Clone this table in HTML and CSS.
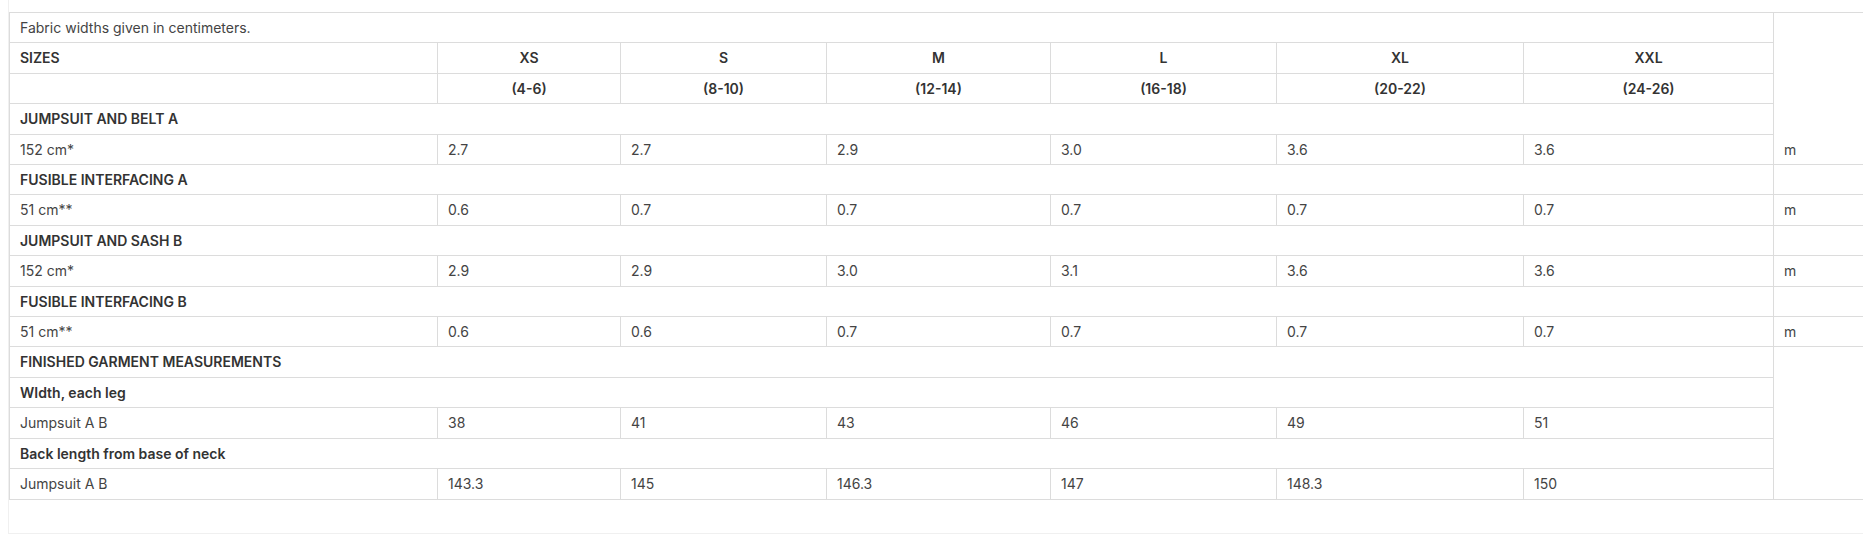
FILE: index.html
```html
<!DOCTYPE html>
<html lang="en">
<head>
<meta charset="utf-8">
<title>Fabric requirements</title>
<link rel="stylesheet" href="styles.css">
</head>
<body>
<div class="wrap">
  <table class="chart">
    <colgroup>
      <col class="c-label">
      <col class="c-xs">
      <col class="c-s">
      <col class="c-m">
      <col class="c-l">
      <col class="c-xl">
      <col class="c-xxl">
      <col class="c-unit">
    </colgroup>
    <tbody>
      <tr><td colspan="7" class="note">Fabric widths given in centimeters.</td></tr>
      <tr class="head">
        <td>SIZES</td><td class="ctr">XS</td><td class="ctr">S</td><td class="ctr">M</td><td class="ctr">L</td><td class="ctr">XL</td><td class="ctr">XXL</td>
      </tr>
      <tr class="head">
        <td></td><td class="ctr">(4-6)</td><td class="ctr">(8-10)</td><td class="ctr">(12-14)</td><td class="ctr">(16-18)</td><td class="ctr">(20-22)</td><td class="ctr">(24-26)</td>
      </tr>
      <tr class="head"><td colspan="7">JUMPSUIT AND BELT A</td></tr>
      <tr><td>152 cm*</td><td>2.7</td><td>2.7</td><td>2.9</td><td>3.0</td><td>3.6</td><td>3.6</td><td>m</td></tr>
      <tr class="head"><td colspan="7">FUSIBLE INTERFACING A</td><td></td></tr>
      <tr><td>51 cm**</td><td>0.6</td><td>0.7</td><td>0.7</td><td>0.7</td><td>0.7</td><td>0.7</td><td>m</td></tr>
      <tr class="head"><td colspan="7">JUMPSUIT AND SASH B</td><td></td></tr>
      <tr><td>152 cm*</td><td>2.9</td><td>2.9</td><td>3.0</td><td>3.1</td><td>3.6</td><td>3.6</td><td>m</td></tr>
      <tr class="head"><td colspan="7">FUSIBLE INTERFACING B</td><td></td></tr>
      <tr><td>51 cm**</td><td>0.6</td><td>0.6</td><td>0.7</td><td>0.7</td><td>0.7</td><td>0.7</td><td>m</td></tr>
      <tr class="head"><td colspan="7">FINISHED GARMENT MEASUREMENTS</td></tr>
      <tr class="head"><td colspan="7">WIdth, each leg</td></tr>
      <tr><td>Jumpsuit A B</td><td>38</td><td>41</td><td>43</td><td>46</td><td>49</td><td>51</td></tr>
      <tr class="head"><td colspan="7">Back length from base of neck</td></tr>
      <tr class="last"><td>Jumpsuit A B</td><td>143.3</td><td>145</td><td>146.3</td><td>147</td><td>148.3</td><td>150</td></tr>
    </tbody>
  </table>
</div>
</body>
</html>
```

FILE: styles.css
```css
html, body {
  margin: 0;
  padding: 0;
  background: #ffffff;
}

body {
  font-family: Inter, "Noto Sans", "Liberation Sans", sans-serif;
  font-size: 14px;
  color: #444444;
}

.wrap {
  margin-left: 8px;
  padding: 12px 0 33px 0;
  border-left: 1px solid #f0f0f0;
  border-bottom: 1px solid #f0f0f0;
  overflow: hidden;
}

.chart {
  border-collapse: separate;
  border-spacing: 0;
  table-layout: fixed;
  width: 1884px;
  border-top: 1px solid #dcdcdc;
  border-left: 1px solid #dcdcdc;
  border-bottom: 1px solid #dcdcdc;
}

.c-label { width: 428px; }
.c-xs { width: 183px; }
.c-s { width: 206px; }
.c-m { width: 224px; }
.c-l { width: 226px; }
.c-xl { width: 247px; }
.c-xxl { width: 250px; }
.c-unit { width: 120px; }

.chart td {
  padding: 5px 10px;
  line-height: 19.4px;
  border-right: 1px solid #dcdcdc;
  border-bottom: 1px solid #dcdcdc;
  vertical-align: middle;
  text-align: left;
  white-space: nowrap;
}

.chart tr.last td {
  border-bottom: none;
}

.chart .head td {
  font-weight: 600;
  color: #333333;
}

.chart td.ctr {
  text-align: center;
}

.chart td.note {
  font-weight: 400;
}
```
